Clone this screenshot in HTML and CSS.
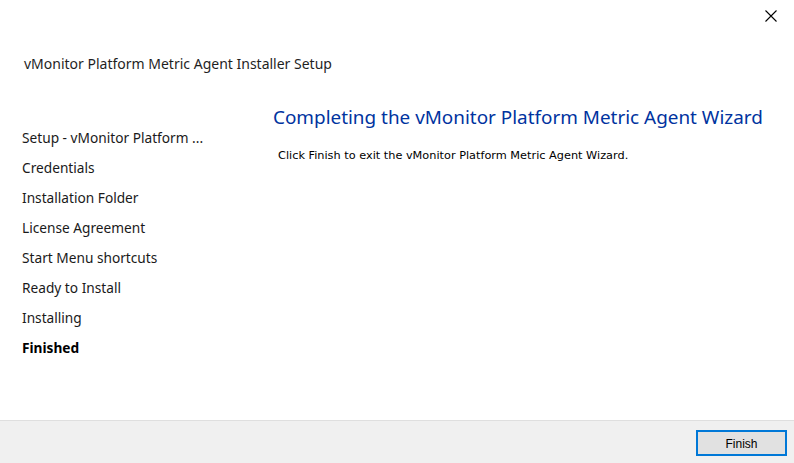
FILE: index.html
```html
<!DOCTYPE html>
<html>
<head>
<meta charset="utf-8">
<link rel="stylesheet" href="styles.css">
</head>
<body>
<div class="window">
  <div class="titlebar">
    <button class="close" aria-label="Close">
      <svg width="12" height="12" viewBox="0 0 12 12"><path d="M0.5 0.5 L11.5 11.5 M11.5 0.5 L0.5 11.5" stroke="#000" stroke-width="1.1" fill="none"/></svg>
    </button>
  </div>
  <div class="apptitle">vMonitor Platform Metric Agent Installer Setup</div>
  <div class="main">
    <ul class="steps">
      <li>Setup - vMonitor Platform ...</li>
      <li>Credentials</li>
      <li>Installation Folder</li>
      <li>License Agreement</li>
      <li>Start Menu shortcuts</li>
      <li>Ready to Install</li>
      <li>Installing</li>
      <li class="current">Finished</li>
    </ul>
    <div class="content">
      <h1 class="heading">Completing the vMonitor Platform Metric Agent Wizard</h1>
      <p class="body">Click Finish to exit the vMonitor Platform Metric Agent Wizard.</p>
    </div>
  </div>
  <div class="footer">
    <button class="btn">Finish</button>
  </div>
</div>
</body>
</html>
```
FILE: styles.css
```css
html, body { margin: 0; padding: 0; background: #fff; }
body { font-family: "Noto Sans", "Open Sans", sans-serif; color: #000; }
.window { width: 794px; height: 463px; display: flex; flex-direction: column; }
.titlebar { height: 32px; display: flex; justify-content: flex-end; }
.close { width: 46px; height: 32px; border: 0; background: transparent; padding: 0; display: flex; align-items: center; justify-content: center; }
.apptitle { padding: 22px 0 0 24px; font-size: 14px; line-height: 20px; color: #1f1f1f; height: 34px; }
.main { flex: 1; display: flex; }
.steps { list-style: none; margin: 0; padding: 35px 0 0 22px; width: 251px; box-sizing: content-box; }
.steps li { font-size: 13.7px; line-height: 30px; height: 30px; color: #1a1a1a; }
.steps li.current { font-weight: bold; color: #000; }
.content { flex: 1; }
.heading { margin: 0; font-weight: normal; font-size: 18.9px; line-height: 28px; color: #0033a0; padding-top: 15px; }
.body { margin: 17px 0 0 5px; font-family: "DejaVu Sans", sans-serif; font-size: 11.3px; line-height: 16px; color: #000; }
.footer { height: 43px; background: #f0f0f0; border-top: 1px solid #dfdfdf; display: flex; justify-content: flex-end; align-items: flex-start; padding: 9px 7px 0 0; box-sizing: border-box; }
.btn { width: 91px; height: 26px; border: 2px solid #0078d7; background: #e1e1e1; font-family: "Liberation Sans", sans-serif; font-size: 12px; color: #000; padding: 1px 0 0; }
```
